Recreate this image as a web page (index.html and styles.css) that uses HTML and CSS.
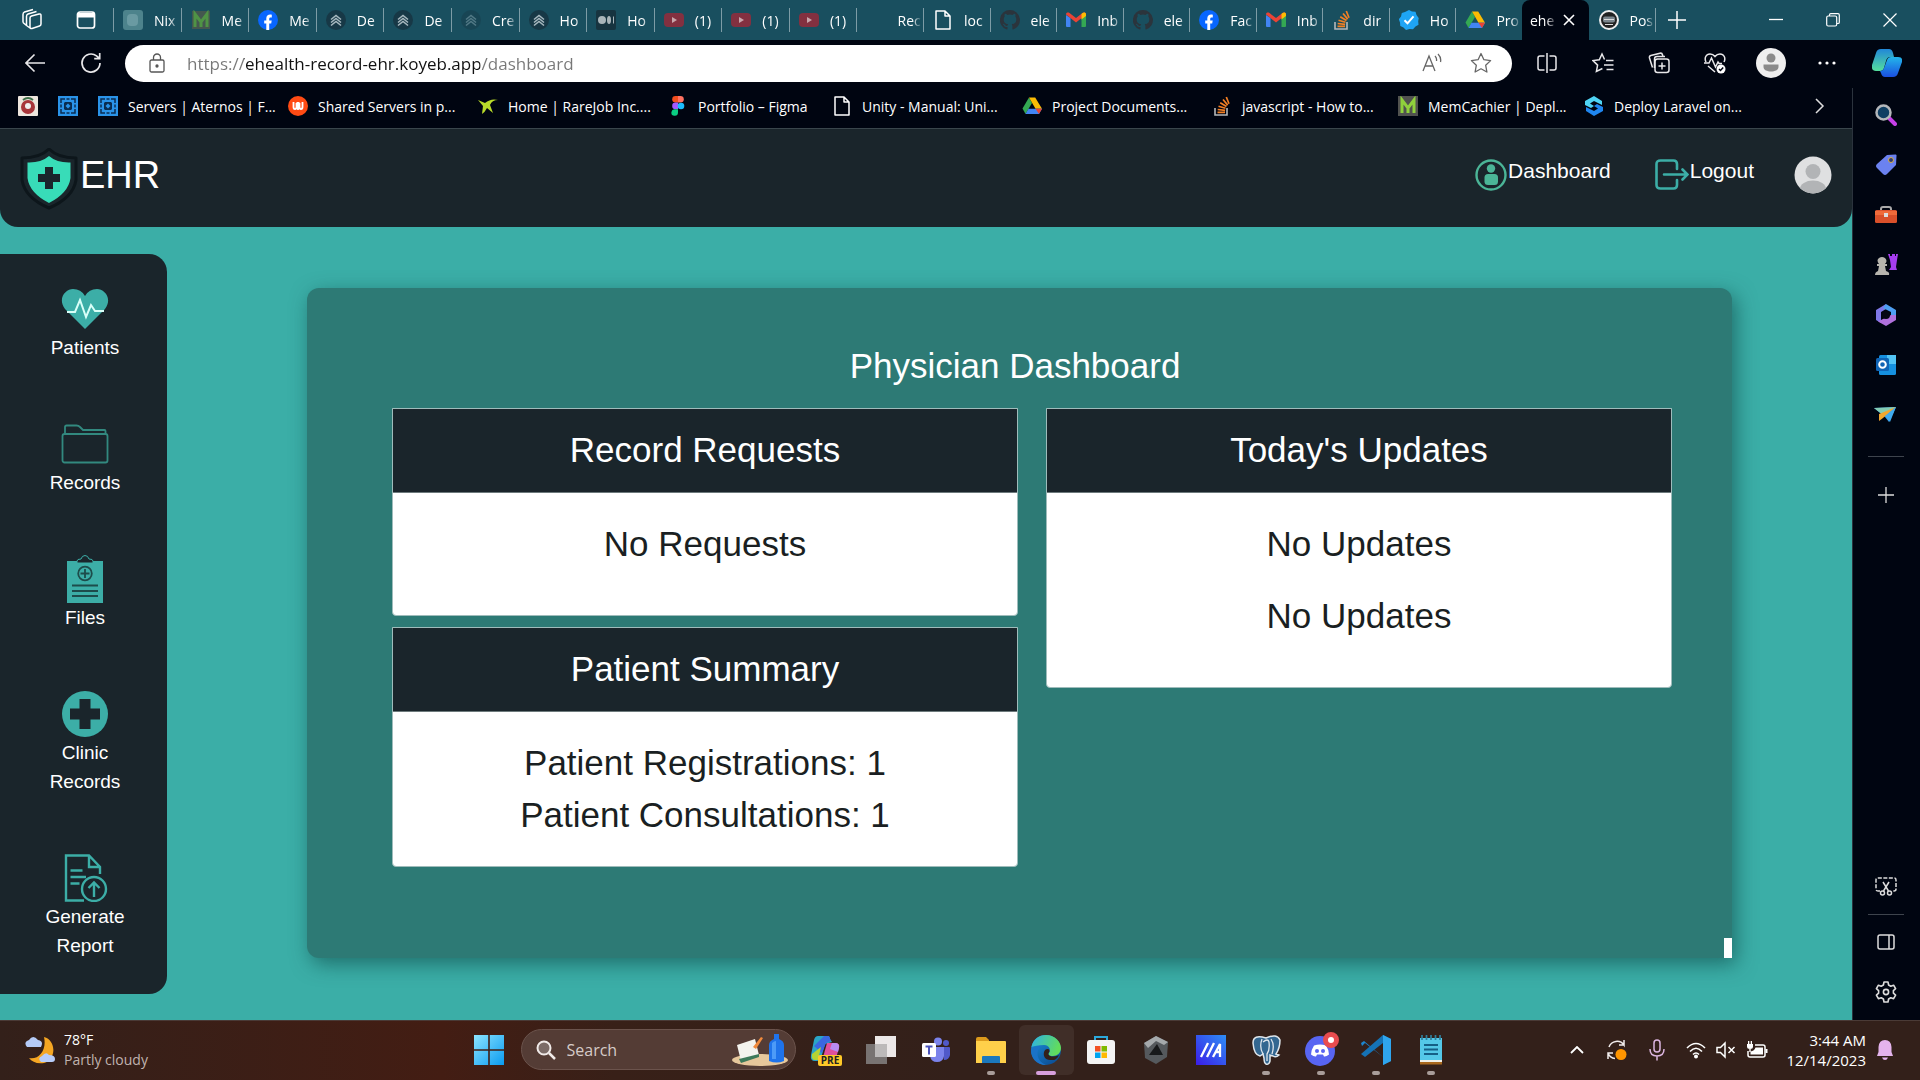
FILE: index.html
```html
<!DOCTYPE html>
<html lang="en">
<head>
<meta charset="utf-8">
<meta name="viewport" content="width=device-width, initial-scale=1">
<title>ehealth-record-ehr</title>
<link rel="stylesheet" href="styles.css">
</head>
<body>
<svg class="sprite" aria-hidden="true">
  <symbol id="i-m" viewBox="0 0 20 20"><rect x="1" y="1" width="18" height="18" fill="#44574f"/><path d="M4 17V4l6 8 6-8v13M10 12v5" fill="none" stroke="#4f9345" stroke-width="3"/></symbol>
  <symbol id="i-fb" viewBox="0 0 20 20"><circle cx="10" cy="10" r="10" fill="#0866ff"/><path d="M8.3 20v-6.6H6.2v-3h2.1V8.6c0-3 1.6-4.1 3.8-4.1.8 0 1.3.1 1.7.2v2.7h-1.2c-1.1 0-1.4.6-1.4 1.5v1.5h2.5l-.5 3h-2V20z" fill="#fff"/></symbol>
  <symbol id="i-koyeb" viewBox="0 0 20 20"><circle cx="10" cy="10" r="10" fill="#173846"/><path d="M5 9.500l5-4 5 4M5 12.500l5-4 5 4M5 15.500l5-4 5 4" fill="none" stroke="#a7b8bf" stroke-width="1.600"/></symbol>
  <symbol id="i-yt" viewBox="0 0 20 20"><rect x="0" y="3" width="20" height="14" rx="4" fill="#833040"/><path d="M8 7l5 3-5 3z" fill="#c9a5ab"/></symbol>
  <symbol id="i-file" viewBox="0 0 20 20"><path d="M3 1h9l5 5v13H3zM12 1v5h5" fill="none" stroke="#fff" stroke-width="1.500" stroke-linejoin="round"/></symbol>
  <symbol id="i-gh" viewBox="0 0 20 20"><path d="M10 0a10 10 0 0 0-3.200 19.500c.5.100.7-.2.7-.5v-2c-2.800.6-3.300-1.200-3.300-1.200-.5-1.100-1.100-1.400-1.100-1.400-.9-.6.100-.6.100-.6 1 .1 1.500 1 1.500 1 .9 1.500 2.300 1.100 2.900.8.100-.6.400-1.100.6-1.300-2.200-.3-4.500-1.100-4.500-5 0-1.100.4-2 1-2.700-.1-.3-.4-1.300.1-2.700 0 0 .8-.3 2.700 1a9.600 9.600 0 0 1 5 0c1.900-1.300 2.700-1 2.700-1 .5 1.400.2 2.400.1 2.700.6.700 1 1.600 1 2.700 0 3.900-2.300 4.700-4.600 5 .4.300.7.900.7 1.900V19c0 .3.200.6.700.500A10 10 0 0 0 10 0z" fill="#2b343c"/></symbol>
  <symbol id="i-gmail" viewBox="0 0 20 20"><path d="M0 5v11a1 1 0 0 0 1 1h3.500V8z" fill="#4285f4"/><path d="M20 5v11a1 1 0 0 1-1 1h-3.500V8z" fill="#34a853"/><path d="M0 4.500C0 2.500 2 2 3.500 3L10 8l6.500-5C18 2 20 2.500 20 4.500L10 12.500z" fill="#ea4335"/><path d="M15.500 4l1-.9C18 2 20 2.500 20 4.500V6l-4.500 3.500z" fill="#fbbc04"/></symbol>
  <symbol id="i-so" viewBox="0 0 20 20"><path d="M3 12v7h12v-7" fill="none" stroke="#b5b8bb" stroke-width="1.600"/><path d="M5.500 16.300h7.500M5.700 13.500l7.400.8M6.500 10.300l7 2M8.200 6.800l6.300 3.700M11 3.500l4.700 5.600M14.300 1l2.700 6.800" stroke="#f48024" stroke-width="1.700"/></symbol>
  <symbol id="i-check" viewBox="0 0 20 20"><path d="M10 0l3 1.500 3.500.300 1 3.200L19.700 8l-.5 3.300.3 3.500-3 1.700L14 19.300l-3.500-.3L7 20l-2.500-2.500L1.300 16 1 12.500-.2 9.300 2 6.500 2.800 3 6 2z" fill="#1ea5f5"/><path d="M5.500 10.300l3 3 6-7" fill="none" stroke="#fff" stroke-width="2"/></symbol>
  <symbol id="i-drive" viewBox="0 0 20 20"><path d="M7 1.500L.5 12.500 3.500 18 10 7z" fill="#34a853"/><path d="M7 1.500h6.200L20 12.800h-6.500z" fill="#fbbc04"/><path d="M6.500 12.800H20L17 18H3.500z" fill="#4285f4"/><path d="M13.500 12.800H20L17 18z" fill="#ea4335"/></symbol>
  <symbol id="i-robot" viewBox="0 0 20 20"><circle cx="10" cy="10" r="9" fill="#222" stroke="#eee" stroke-width="2"/><rect x="4" y="6.500" width="12" height="6" rx="2" fill="#7b858c"/><path d="M5 9.500h10M6 14.500h8" stroke="#ddd"/></symbol>
  <symbol id="i-aternos" viewBox="0 0 20 20"><rect width="20" height="20" fill="#2a93e8"/><path d="M3 7V3h4M13 3h4v4M17 13v4h-4M7 17H3v-4M8.500 3h3M8.500 17h3M3 8.500v3M17 8.500v3" fill="none" stroke="#0a2d50" stroke-width="1.500"/><path d="M7 6h6l1 1v6l-1 1H7l-1-1V7z" fill="#0a2d50"/><path d="M10 7.500l2.500 2.500-2.500 2.500L7.500 10z" fill="#2a93e8"/></symbol>
  <symbol id="i-edge" viewBox="0 0 32 32"><defs><linearGradient id="eg1" x1="0" y1="0" x2="1" y2=".3"><stop stop-color="#2cb2e8"/><stop offset="1" stop-color="#62dc5c"/></linearGradient><linearGradient id="eg2" x1="0" y1="0" x2=".7" y2="1"><stop stop-color="#1d93de"/><stop offset="1" stop-color="#0c4f96"/></linearGradient></defs><circle cx="16" cy="16" r="15" fill="url(#eg2)"/><path d="M1.500 13C3 5 9 1 16 1c9 0 15 7 15 13 0 5-4 8-8 8-5 0-5-2-4-3 2-2 1-8-5-8-6 0-10 1-12.500 2z" fill="url(#eg1)"/><path d="M19 18.500c-1.500 1.500 0 4 4 4 3 0 5-1 6-1.500-3 6-6 5-9 5-5 0-7-4-6-8 .5-2 2-3 3.500-3 2 0 2.500 2 1.500 3.500z" fill="#332019"/><path d="M12 12C5 16 6 27 16 31 6 31 1 24 1 16c0-2 5-4 11-4z" fill="#1a73c8"/></symbol>
</svg>

<header class="tabstrip">
  <button class="strip-btn" aria-label="Workspaces"><svg width="24" height="24" viewBox="0 0 24 24" fill="none" stroke="#fff" stroke-width="1.500" stroke-linejoin="round"><path d="M10 10q0-1.500 1.500-2l7.500-2q2-.4 2 1.500V16q0 1.500-1.500 2L12 20.500q-2 .5-2-1.500zM6.500 17.500V8.500q0-2 1.500-2.500L16.500 3.500M3 14.500V6.500Q3 4.500 4.500 4L13 1.500M10 20l-3.500-2.500L3 14.500"/></svg></button>
  <button class="strip-btn" aria-label="Tab actions"><svg width="20" height="20" viewBox="0 0 20 20"><rect x="1.500" y="2" width="17" height="16" rx="2.500" fill="none" stroke="#fff" stroke-width="1.700"/><path d="M2 3h16v4.500H2z" fill="#fff"/></svg></button>
  <nav class="tabs" aria-label="Open tabs">
    <div class="tab-group tab-group-a">
      <a class="tab" href="#"><svg class="fav"><rect width="20" height="20" rx="3" fill="#4d838c"/><rect x="4" y="4" width="11" height="12" rx="4" fill="#6a9aa2"/></svg><span>Nix</span></a>
      <a class="tab" href="#"><svg class="fav"><use href="#i-m"/></svg><span>Me</span></a>
      <a class="tab" href="#"><svg class="fav"><use href="#i-fb"/></svg><span>Me</span></a>
      <a class="tab" href="#"><svg class="fav"><use href="#i-koyeb"/></svg><span>De</span></a>
      <a class="tab" href="#"><svg class="fav"><use href="#i-koyeb"/></svg><span>De</span></a>
      <a class="tab" href="#"><svg class="fav dim"><use href="#i-koyeb"/></svg><span>Cre</span></a>
      <a class="tab" href="#"><svg class="fav"><use href="#i-koyeb"/></svg><span>Ho</span></a>
      <a class="tab" href="#"><svg class="fav"><rect width="20" height="20" rx="2" fill="#173440"/><circle cx="6" cy="10" r="4" fill="#a9b5ba"/><ellipse cx="13" cy="10" rx="2" ry="4" fill="#a9b5ba"/><path d="M17.500 6.500v7" stroke="#a9b5ba"/></svg><span>Ho</span></a>
      <a class="tab" href="#"><svg class="fav"><use href="#i-yt"/></svg><span>(1)</span></a>
      <a class="tab" href="#"><svg class="fav"><use href="#i-yt"/></svg><span>(1)</span></a>
      <a class="tab" href="#"><svg class="fav"><use href="#i-yt"/></svg><span>(1)</span></a>
    </div>
    <div class="tab-group tab-group-b">
      <a class="tab" href="#"><svg class="fav"></svg><span>Rec</span></a>
      <a class="tab" href="#"><svg class="fav"><use href="#i-file"/></svg><span>loc</span></a>
      <a class="tab" href="#"><svg class="fav"><use href="#i-gh"/></svg><span>ele</span></a>
      <a class="tab" href="#"><svg class="fav"><use href="#i-gmail"/></svg><span>Inb</span></a>
      <a class="tab" href="#"><svg class="fav"><use href="#i-gh"/></svg><span>ele</span></a>
      <a class="tab" href="#"><svg class="fav"><use href="#i-fb"/></svg><span>Fac</span></a>
      <a class="tab" href="#"><svg class="fav"><use href="#i-gmail"/></svg><span>Inb</span></a>
      <a class="tab" href="#"><svg class="fav"><use href="#i-so"/></svg><span>dir</span></a>
      <a class="tab" href="#"><svg class="fav"><use href="#i-check"/></svg><span>Ho</span></a>
      <a class="tab" href="#"><svg class="fav"><use href="#i-drive"/></svg><span>Pro</span></a>
      <a class="tab active" href="#" aria-current="page"><span>ehe</span><svg width="12" height="12" viewBox="0 0 12 12"><path d="M1 1l10 10M11 1L1 11" stroke="#fff" stroke-width="1.600"/></svg></a>
      <a class="tab after-active" href="#"><svg class="fav"><use href="#i-robot"/></svg><span>Pos</span></a>
    </div>
  </nav>
  <button class="new-tab" aria-label="New tab"><svg width="18" height="18" viewBox="0 0 18 18"><path d="M9 0v18M0 9h18" stroke="#fff" stroke-width="1.500"/></svg></button>
  <div class="window-controls">
    <button aria-label="Minimize"><svg width="14" height="14" viewBox="0 0 14 14"><path d="M0 6.500h14" stroke="#fff" stroke-width="1.300"/></svg></button>
    <button aria-label="Restore"><svg width="14" height="14" viewBox="0 0 14 14" fill="none" stroke="#fff" stroke-width="1.200"><rect x=".7" y="3" width="10" height="10" rx="1.500"/><path d="M3.500 3V2q0-1.300 1.300-1.300H12q1.300 0 1.300 1.300v7.200q0 1.300-1.300 1.300h-1"/></svg></button>
    <button aria-label="Close"><svg width="14" height="14" viewBox="0 0 14 14"><path d="M.5.500l13 13M13.500.500l-13 13" stroke="#fff" stroke-width="1.200"/></svg></button>
  </div>
</header>

<div class="toolbar">
  <button class="tool" aria-label="Back"><svg width="20" height="20" viewBox="0 0 20 20" fill="none" stroke="#e8e8ea" stroke-width="1.600"><path d="M20 10H1M9.500 1.500L1 10l8.500 8.500"/></svg></button>
  <button class="tool" aria-label="Refresh"><svg width="22" height="22" viewBox="0 0 22 22" fill="none" stroke="#e8e8ea" stroke-width="1.700"><path d="M20 11a9 9 0 1 1-3.500-7.100L19.500 6.500M19.700 1v5.700h-5.500"/></svg></button>
  <div class="address">
    <svg width="20" height="20" viewBox="0 0 20 20" fill="none" stroke="#555" stroke-width="1.300"><rect x="3" y="7" width="14" height="12" rx="1.500"/><path d="M6.500 7V4.500a3.500 3.500 0 0 1 7 0V7"/><circle cx="10" cy="13" r="1" fill="#555"/></svg>
    <input class="url" type="text" aria-label="Address" value="https://ehealth-record-ehr.koyeb.app/dashboard">
    <button aria-label="Read aloud"><svg width="20" height="20" viewBox="0 0 20 20" fill="none" stroke="#666" stroke-width="1.300"><path d="M1 18L7 3l6 15M3 13h8M13 3q2 2 1.500 5M16 1q3.500 3.500 2.500 8"/></svg></button>
    <button aria-label="Add to favorites"><svg width="22" height="22" viewBox="0 0 22 22"><path d="M11 1.500l2.900 6.200 6.700.9-4.900 4.700 1.200 6.700L11 16.800 5.100 20l1.200-6.700L1.400 8.600l6.700-.9z" fill="none" stroke="#666" stroke-width="1.300" stroke-linejoin="round"/></svg></button>
  </div>
  <button class="tool" aria-label="Split screen"><svg width="20" height="20" viewBox="0 0 20 20" fill="none" stroke="#e8e8ea" stroke-width="1.500"><path d="M7.500 3H3Q1 3 1 5v10q0 2 2 2h4.500M12.500 3H17q2 0 2 2v10q0 2-2 2h-4.500M10 0v20"/></svg></button>
  <button class="tool" aria-label="Favorites"><svg width="22" height="22" viewBox="0 0 22 22" fill="none" stroke="#e8e8ea" stroke-width="1.500"><path d="M12.500 7.500L10 2 7.300 7.800 1 8.600l4.600 4.500-1.200 6.400 6-3M14 8.500h7.500M12 13h9.500M14.500 17.500h7"/></svg></button>
  <button class="tool" aria-label="Collections"><svg width="22" height="22" viewBox="0 0 22 22" fill="none" stroke="#e8e8ea" stroke-width="1.500"><rect x="7" y="7" width="14" height="13.500" rx="2.500"/><path d="M14 10.500v7M10.500 14h7M4.500 15.500L1.500 6q-.5-2 1.300-2.500L12 1.200q2-.4 2.500 1.500l.3 1.300M6.500 16V7q0-2.500 2.500-2.500h8"/></svg></button>
  <button class="tool" aria-label="Browser essentials"><svg width="22" height="22" viewBox="0 0 22 22" fill="none" stroke="#e8e8ea" stroke-width="1.500"><path d="M2 10C0 6 2 2 6 2q3 0 5 2.500Q13 2 16 2c4 0 6 4 4 8M4 14l7 6M0 11h5l2.500-5 4 9 2.500-5 1 1.500h3"/><circle cx="17" cy="17" r="4.500" fill="#fff" stroke="none"/><path d="M15 17l1.500 1.500 2.700-3" stroke="#000511"/></svg></button>
  <button class="tool" aria-label="Profile"><svg width="30" height="30" viewBox="0 0 30 30"><circle cx="15" cy="15" r="15" fill="#efefef"/><circle cx="15" cy="10" r="4.500" fill="#8b8b8b"/><path d="M7.500 16.500h15v2.500c0 6-15 6-15 0z" fill="#8b8b8b"/></svg></button>
  <button class="tool" aria-label="Settings and more"><svg width="18" height="4" viewBox="0 0 18 4" fill="#fff"><circle cx="2" cy="2" r="1.600"/><circle cx="9" cy="2" r="1.600"/><circle cx="16" cy="2" r="1.600"/></svg></button>
  <button class="tool tool-copilot" aria-label="Copilot"><svg width="30" height="28" viewBox="0 0 30 28"><defs><linearGradient id="cp1" x1="0" y1="0" x2="0" y2="1"><stop stop-color="#2187d8"/><stop offset="1" stop-color="#55df9c"/></linearGradient><linearGradient id="cp2" x1="0" y1="0" x2="0" y2="1"><stop stop-color="#23b6ea"/><stop offset="1" stop-color="#1a4fe0"/></linearGradient></defs><path d="M9 0h8q3 0 4 4l1 4h-4q-3 0-4 4l-2 7q-1 3-4 3H4q-5 0-4-6L4 4q1-4 5-4z" fill="url(#cp1)"/><path d="M21 28h-8q-3 0-4-4l-1-2q3 0 4-3l3-8q1-3 4-3h7q5 0 4 5l-4 11q-1 4-5 4z" fill="url(#cp2)"/></svg></button>
</div>

<div class="workspace">
  <div class="viewport">
    <nav class="bookmarks" aria-label="Bookmarks">
      <a class="bookmark-icon" href="#" aria-label="Badge site"><svg class="fav"><rect width="20" height="20" rx="1" fill="#eee6de"/><circle cx="10" cy="11" r="7" fill="#a8353a"/><circle cx="10" cy="10" r="3" fill="#eee"/><path d="M5 4q5-4 10 0" stroke="#3c6d46" stroke-width="2" fill="none"/></svg></a>
      <a class="bookmark-icon" href="#" aria-label="Aternos"><svg class="fav"><use href="#i-aternos"/></svg></a>
      <a class="bookmark" href="#"><svg class="fav"><use href="#i-aternos"/></svg><span>Servers | Aternos | F...</span></a>
      <a class="bookmark" href="#"><svg class="fav"><circle cx="10" cy="10" r="10" fill="#ff4b14"/><path d="M5.500 6v5q0 2 1.500 2t1.500-2V7M8.500 7h3M11.500 7v4q0 2 1.500 2t1.500-2V6M10 7v7" fill="none" stroke="#fff" stroke-width="1.800"/></svg><span>Shared Servers in p...</span></a>
      <a class="bookmark" href="#"><svg class="fav"><path d="M0 4l7 3Q13 2 20 4q-6 0-8 5l3 8-6-5q-2 4-5 6l1-8z" fill="#b9dc2a"/></svg><span>Home | RareJob Inc....</span></a>
      <a class="bookmark bookmark-short" href="#"><svg class="fav"><path d="M10 0H7.500a3.300 3.300 0 0 0 0 6.600H10z" fill="#f24e1e"/><path d="M10 0h2.500a3.300 3.300 0 0 1 0 6.600H10z" fill="#ff7262"/><path d="M10 6.600H7.500a3.300 3.300 0 0 0 0 6.600H10z" fill="#a259ff"/><circle cx="13" cy="10" r="3.300" fill="#1abcfe"/><path d="M10 13.300H7.500a3.300 3.300 0 1 0 2.500 3.300z" fill="#0acf83"/></svg><span>Portfolio – Figma</span></a>
      <a class="bookmark" href="#"><svg class="fav"><use href="#i-file"/></svg><span>Unity - Manual: Uni...</span></a>
      <a class="bookmark" href="#"><svg class="fav"><use href="#i-drive"/></svg><span>Project Documents...</span></a>
      <a class="bookmark bookmark-compact" href="#"><svg class="fav"><use href="#i-so"/></svg><span>javascript - How to...</span></a>
      <a class="bookmark bookmark-compact" href="#"><svg class="fav"><rect width="20" height="20" fill="#51524f"/><path d="M4 17V4l6 8 6-8v13M10 12v5" fill="none" stroke="#8fd13c" stroke-width="3"/></svg><span>MemCachier | Depl...</span></a>
      <a class="bookmark bookmark-compact" href="#"><svg class="fav"><path d="M10 0l8 5v4l-8-4-4 2.500 4 2.500-3 2-6-3V5z" fill="#4fd4f4"/><path d="M10 20l-8-5v-4l8 4 4-2.500L10 10l3-2 6 3v4z" fill="#1f86f0"/></svg><span>Deploy Laravel on...</span></a>
      <button class="bookmark-more" aria-label="More bookmarks"><svg width="10" height="16" viewBox="0 0 10 16"><path d="M1 1l7 7-7 7" fill="none" stroke="#ddd" stroke-width="1.500"/></svg></button>
    </nav>

    <div class="page">
      <header class="site-header">
        <a class="brand" href="#"><svg width="60" height="62" viewBox="0 0 60 62"><path d="M29 1q9 9 27 9v22Q53 50 29 60 5 50 2 32V10q18 0 27-9z" fill="none" stroke="#0d161b" stroke-width="3" stroke-linejoin="round"/><path d="M29 8q8 7 21.500 6.500V30q-2 15-21.500 25Q9.500 45 7.500 30V14.500Q21 15 29 8z" fill="#38dcb8"/><path d="M25 19h8v7h7v8h-7v7h-8v-7h-7v-8h7z" fill="#1a252b"/></svg><span>EHR</span></a>
        <nav class="site-nav">
          <a href="#"><svg width="32" height="32" viewBox="0 0 32 32"><circle cx="16" cy="16" r="14.500" fill="none" stroke="#4bb597" stroke-width="2.400"/><circle cx="16" cy="9.500" r="4.200" fill="#4bb597"/><rect x="9.500" y="15" width="13.500" height="11" rx="3.500" fill="#4bb597"/></svg><span>Dashboard</span></a>
          <a href="#"><svg width="34" height="32" viewBox="0 0 34 32" fill="none" stroke="#3caea7" stroke-width="2.600" stroke-linecap="round"><path d="M22 10V5q0-3.500-3.500-3.500h-13Q1.500 1.500 1.500 5v21q0 3.500 4 3.500h13q3.500 0 3.500-3.500v-5M9 15.500h23M27.500 10.500l5 5-5 5"/></svg><span>Logout</span></a>
          <a class="avatar" href="#" aria-label="Profile"><svg width="38" height="38" viewBox="0 0 38 38"><defs><clipPath id="av"><circle cx="19" cy="19" r="18.500"/></clipPath></defs><g clip-path="url(#av)"><rect width="38" height="38" fill="#dfe0e1"/><circle cx="19" cy="15.500" r="7.500" fill="#b2b4b6"/><ellipse cx="19" cy="33" rx="13" ry="8.500" fill="#b2b4b6"/></g></svg></a>
        </nav>
      </header>

      <div class="site-body">
        <nav class="site-sidebar" aria-label="Sections">
          <a href="#"><svg class="side-icon" viewBox="0 0 48 48"><path d="M24 44L4 24C-4 13 5 4 12 4q8 0 12 7Q28 4 36 4c7 0 16 9 8 20z" fill="#3caea7"/><path d="M6 27h8l5-12 6 17 5-12 4 6h9" fill="none" stroke="#d9fff8" stroke-width="2"/></svg><span>Patients</span></a>
          <a href="#"><svg class="side-icon" viewBox="0 0 48 48" fill="none" stroke="#32897f" stroke-width="1.800"><rect x="1.500" y="14" width="45" height="28.500" rx="2"/><path d="M4 14V7q0-1.500 1.500-1.500h10q2 0 3.500 1.500l3 3h21.500q1 0 1 1v3"/></svg><span>Records</span></a>
          <a href="#"><svg class="side-icon" viewBox="0 0 48 48"><rect x="6" y="6" width="36" height="42" fill="#3caea7"/><path d="M16 8v-2q0-2 4-2 1-3.500 4-3.500T28 4q4 0 4 2v2z" fill="#1a252b" stroke="#3caea7" stroke-width="1"/><circle cx="24" cy="18.500" r="6.800" fill="none" stroke="#1d4c4b" stroke-width="1.800"/><path d="M24 14v9M19.500 18.500h9M11 30.500h26M11 36h26M11 41h26" stroke="#1d4c4b" stroke-width="1.800"/></svg><span>Files</span></a>
          <a href="#"><svg class="side-icon" viewBox="0 0 48 48"><circle cx="24" cy="24" r="23" fill="#3caea7"/><path d="M18.500 9h11v9.500H39v11h-9.500V39h-11v-9.500H9v-11h9.500z" fill="#1a252b"/></svg><span>Clinic<br>Records</span></a>
          <a href="#"><svg class="side-icon" viewBox="0 0 48 48" fill="none" stroke="#3caea7" stroke-width="2.400"><path d="M23 46.500H5V1.500h23L39 13v7M28 1.500V13h11M9.500 16.500h12M9.500 23H25M9.500 29.500h9"/><circle cx="33" cy="35" r="12"/><path d="M33 43V28.500M27.500 34l5.500-5.500 5.500 5.500"/></svg><span>Generate<br>Report</span></a>
        </nav>
        <main class="panel">
          <h1>Physician Dashboard</h1>
          <div class="card-columns">
            <div class="card-column">
              <section class="card">
                <h2>Record Requests</h2>
                <div class="card-body"><p class="spaced">No Requests</p></div>
              </section>
              <section class="card">
                <h2>Patient Summary</h2>
                <div class="card-body"><p>Patient Registrations: 1</p><p>Patient Consultations: 1</p></div>
              </section>
            </div>
            <div class="card-column">
              <section class="card">
                <h2>Today's Updates</h2>
                <div class="card-body"><p class="spaced">No Updates</p><p class="spaced">No Updates</p></div>
              </section>
            </div>
          </div>
          <span class="scroll-corner"></span>
        </main>
      </div>
    </div>
  </div>

  <aside class="edge-bar" aria-label="Browser sidebar">
    <button aria-label="Search"><svg width="22" height="22" viewBox="0 0 22 22"><path d="M14 14l6 6" stroke="#c640e8" stroke-width="4" stroke-linecap="round"/><circle cx="8.500" cy="8.500" r="7" fill="#0f3f63" stroke="#b4b7ba" stroke-width="2.500"/></svg></button>
    <button aria-label="Shopping"><svg width="22" height="22" viewBox="0 0 22 22"><path d="M12 1l8.500-.5q1 0 1 1L21 11l-9 9q-2 2-4 0l-6-6q-2-2 0-4z" fill="#6b82f0"/><circle cx="16" cy="6" r="2.500" fill="#303a70" stroke="#d8b04c"/></svg></button>
    <button aria-label="Tools"><svg width="24" height="20" viewBox="0 0 24 20"><path d="M7 6V4q0-2 2-2h6q2 0 2 2v2" fill="none" stroke="#aaa" stroke-width="2"/><rect x="1" y="5" width="22" height="13" rx="1.500" fill="#d9502a"/><path d="M1 6h22v4H1z" fill="#f06b3a"/><rect x="10" y="8" width="4" height="4" fill="#ddd"/></svg></button>
    <button aria-label="Games"><svg width="24" height="24" viewBox="0 0 24 24"><path d="M4 22h-3q0-3 3-4l1-5H3v-2h2q-3-4 0-6 3-2 6 0 3 3 0 6h2v2h-2l1 5q4 1 3 4z" fill="#b7b5ae"/><path d="M14 1h2v2h2V1h3v2h1V1h2l-1 6-1 7 1 3h-8l2-3-1-7z" fill="#a63df0"/></svg></button>
    <button aria-label="Microsoft 365"><svg width="22" height="22" viewBox="0 0 22 22"><path d="M11 0L1 6v10l5 3V8l5-3z" fill="#7f78e8"/><path d="M11 0l10 6v10l-5-5V8L8 4z" fill="#4d9ff2"/><path d="M21 11v5l-10 6-8-4.500 13-6.500z" fill="#b071dd"/><circle cx="11" cy="11" r="4" fill="#050814"/></svg></button>
    <button aria-label="Outlook"><svg width="22" height="22" viewBox="0 0 22 22"><rect x="4" y="1" width="17" height="20" rx="1.500" fill="#1590df"/><path d="M12 1h9v9h-9z" fill="#52c4f5"/><rect x="1" y="4" width="13" height="13" rx="1.500" fill="#0f64b5"/><circle cx="7.500" cy="10.500" r="3.300" fill="none" stroke="#fff" stroke-width="2"/></svg></button>
    <button aria-label="Drop"><svg width="24" height="18" viewBox="0 0 24 18"><path d="M0 2l22-1-7 15-4-5z" fill="#3b9ce6"/><path d="M0 2l22-1L9 9z" fill="#84cdb4"/><path d="M22 1L5 8v7l4-3z" fill="#f2a72f"/><path d="M22 1L11 10l5 6z" fill="#3fabf0"/></svg></button>
    <span class="edge-rule edge-rule-top"></span>
    <button aria-label="Customize"><svg width="16" height="16" viewBox="0 0 16 16"><path d="M8 0v16M0 8h16" stroke="#ddd" stroke-width="1.300"/></svg></button>
    <button class="edge-lower" aria-label="Screenshot"><svg width="22" height="20" viewBox="0 0 22 20" fill="none" stroke="#ddd" stroke-width="1.500"><path d="M5 14H3q-2 0-2-2V3q0-2 2-2h16q2 0 2 2v9q0 2-2 2h-2" stroke-dasharray="4 1.500"/><path d="M8 5l5.500 9M14 5l-5.500 9"/><circle cx="7.500" cy="16" r="2"/><circle cx="14.500" cy="16" r="2"/></svg></button>
    <span class="edge-rule edge-rule-bottom"></span>
    <button aria-label="Toggle sidebar"><svg width="18" height="18" viewBox="0 0 18 18" fill="none" stroke="#ddd" stroke-width="1.500"><rect x="1" y="2" width="16" height="14" rx="2"/><path d="M12 2v14"/></svg></button>
    <button aria-label="Settings"><svg width="22" height="22" viewBox="0 0 22 22" fill="none" stroke="#ddd" stroke-width="1.600" stroke-linejoin="round"><path d="M9 1h4l.6 3 2.200 1.200 2.800-1 2 3.500-2.200 2v2.500l2.200 2-2 3.500-2.800-1-2.200 1.300L13 21H9l-.6-3-2.200-1.300-2.800 1-2-3.500 2.200-2V9.700l-2.200-2 2-3.500 2.800 1L8.400 4z"/><circle cx="11" cy="11" r="2.600"/></svg></button>
  </aside>
</div>

<footer class="taskbar">
  <button class="weather"><svg width="32" height="28" viewBox="0 0 32 28"><path d="M20 1c12 3 13 22 0 26-7 1-12-1-15-5 10 2 18-8 15-21z" fill="#f5a623"/><path d="M3 11q-4-5 2-7 4-6 9 0 6 1 3 7z" fill="#b5cbf7"/><path d="M17 26q-4-4 1-6 4-5 7-1 6 0 6 4 0 3-3 3z" fill="#b8cdfa"/></svg><span class="weather-text"><span>78°F</span><span class="muted">Partly cloudy</span></span></button>
  <div class="task-center">
    <button class="task" aria-label="Start"><svg width="30" height="30" viewBox="0 0 30 30"><defs><linearGradient id="win" x1="0" y1="0" x2="1" y2="1"><stop stop-color="#8ce4ff"/><stop offset="1" stop-color="#0a9bf0"/></linearGradient></defs><path d="M0 0h14.200v14.200H0zM15.800 0H30v14.200H15.800zM0 15.800h14.200V30H0zM15.800 15.800H30V30H15.800z" fill="url(#win)"/></svg></button>
    <label class="task-search"><svg width="20" height="20" viewBox="0 0 20 20"><circle cx="8" cy="8" r="6.500" fill="#7b6b67" stroke="#f1ebe9" stroke-width="2"/><path d="M13 13l6 6" stroke="#f1ebe9" stroke-width="2.500"/></svg><input type="search" placeholder="Search" aria-label="Search"><svg width="58" height="34" viewBox="0 0 58 34"><ellipse cx="29" cy="27" rx="28" ry="6" fill="#e6c79b"/><path d="M6 12l18-6 4 16-18 6z" fill="#f3f3ee"/><path d="M8 26l20-5v3L10 30z" fill="#3d7a5a"/><path d="M22 14l8-10 2 1-7 11z" fill="#f08a3c"/><path d="M38 12q0-4 5-6V1h5v5q5 2 5 6v16q-7 3-15 0z" fill="#1f73ea"/><path d="M41 10q2-2 4-2v18h-4z" fill="#4d9bf7"/></svg></label>
    <button class="task" aria-label="Copilot preview"><svg width="32" height="32" viewBox="0 0 32 32"><path d="M8 2h9q3 0 3 3l2 3-7 2-4 14q-1 3-4 3H5q-5 0-4-6L4 6q1-4 4-4z" fill="#2aa5c8"/><path d="M4 12l10-10h5l2 5-5 2-4 10z" fill="#3a67e0"/><path d="M2 20l9-7-3 13H5q-4 0-3-6z" fill="#b5d334"/><path d="M17 9h8q5 0 4 5l-3 10q-1 3-5 3h-9z" fill="#e0509c"/><path d="M22 9h3q5 0 4 5l-1 4-8-3z" fill="#b88bf2"/><rect x="8" y="21" width="24" height="11" rx="2" fill="#ffc928"/><text x="20" y="30" class="pre-tag">PRE</text></svg></button>
    <button class="task" aria-label="Task view"><svg width="30" height="30" viewBox="0 0 30 30"><rect x="9" y="1" width="21" height="21" fill="#ece8e8"/><rect y="9" width="21" height="20" fill="#7f7c7c" fill-opacity=".9"/><path d="M9 9h12v13H9z" fill="#bcb9b9"/></svg></button>
    <button class="task" aria-label="Teams"><svg width="28" height="26" viewBox="0 0 28 26"><circle cx="16" cy="4.500" r="4" fill="#7b83eb"/><circle cx="24" cy="6" r="3" fill="#5059c9"/><path d="M20 10h7q1 0 1 1v7q-1 5-6 5z" fill="#5059c9"/><path d="M8 10h14v9q-1 6-7 6t-7-6z" fill="#7b83eb"/><rect y="6" width="14" height="14" rx="1.500" fill="#fff"/><path d="M3.500 9.500h7M7 9.500v8" stroke="#4b53bc" stroke-width="2"/></svg></button>
    <button class="task running" aria-label="File Explorer"><svg width="32" height="28" viewBox="0 0 32 28"><path d="M1 3q0-2 2-2h8l3 3v5H1z" fill="#dc9a1c"/><path d="M1 5h29q1 0 1 1v21H1z" fill="#ffd04a"/><path d="M7 27v-6q0-1 1-1h16q1 0 1 1v6z" fill="#1b78bd"/></svg></button>
    <button class="task running current" aria-label="Edge"><svg width="32" height="32"><use href="#i-edge"/></svg></button>
    <button class="task" aria-label="Store"><svg width="30" height="30" viewBox="0 0 30 30"><path d="M9 7V2h12v5" fill="none" stroke="#2ca9dc" stroke-width="2"/><rect x="1" y="5" width="28" height="24" rx="3" fill="#f4f4f4"/><path d="M9 11h5.500v5.500H9z" fill="#f25022"/><path d="M15.500 11H21v5.500h-5.500z" fill="#7fba00"/><path d="M9 17.500h5.500V23H9z" fill="#00a4ef"/><path d="M15.500 17.500H21V23h-5.500z" fill="#ffb900"/></svg></button>
    <button class="task" aria-label="Armoury"><svg width="26" height="28" viewBox="0 0 26 28"><path d="M13 0l12 6-1 15-11 7-11-6L1 7z" fill="#55595d"/><path d="M13 0l12 6-4 3-8-4-8 7-4-5z" fill="#a5a9ac"/><path d="M14 8l6 11H6z" fill="#17191b"/></svg></button>
    <button class="task" aria-label="MyASUS"><svg width="30" height="30" viewBox="0 0 30 30"><defs><linearGradient id="asus" x1="0" y1="1" x2="1" y2="0"><stop stop-color="#3b1ce8"/><stop offset="1" stop-color="#2d8ef5"/></linearGradient></defs><rect width="30" height="30" fill="url(#asus)"/><path d="M5 22L12 8M11 22l7-14M17 22l7-13v13M19 17h4" fill="none" stroke="#fff" stroke-width="2.300"/></svg></button>
    <button class="task running" aria-label="PostgreSQL"><svg width="30" height="30" viewBox="0 0 30 30"><path d="M15 3Q26-2 29 5q0 8-4 14l3 1q-3 3-6 1l-3-1v6q-1 4-4 3-2-1-2-6l-1-4-3 2Q3 20 2 8 2-1 15 3z" fill="#336791" stroke="#dfe6ec" stroke-width="1.500"/><path d="M11 4q-3 8 1 15M20 4q4 6 1 15M12 7q5-4 6 0 1 8-2 12v7" fill="none" stroke="#dfe6ec" stroke-width="1.300"/></svg></button>
    <button class="task running" aria-label="Discord"><svg width="36" height="36" viewBox="0 0 36 36"><circle cx="17" cy="19" r="15" fill="#5865f2"/><path d="M11 13.500q6-2 12 0 3 4.500 3 9-3 2.500-5 2l-1-2h-6l-1 2q-2 .5-5-2 0-4.500 3-9z" fill="#fff"/><circle cx="14" cy="19" r="2" fill="#5865f2"/><circle cx="20" cy="19" r="2" fill="#5865f2"/><circle cx="28" cy="8" r="5.500" fill="#fff" stroke="#e84c4f" stroke-width="5"/></svg></button>
    <button class="task running" aria-label="Visual Studio Code"><svg width="30" height="30" viewBox="0 0 30 30"><path d="M22 0l8 4v22l-8 4v-8L4 8 1 11l-1-3 3-2 19 16z" fill="#1c86cf"/><path d="M22 0v8L4 22l-4-3z" fill="#1572b5"/><path d="M22 0l8 4v22l-8 4z" fill="#2fa5ee"/></svg></button>
    <button class="task running" aria-label="Notepad"><svg width="24" height="30" viewBox="0 0 24 30"><path d="M1 3h22v25H1z" fill="#54c8e8"/><path d="M1 25h22v2H1z" fill="#f0efe8"/><path d="M1 27h22v2.500H1z" fill="#a9681d"/><path d="M3 0v5M7.500 0v5M12 0v5M16.500 0v5M21 0v5" stroke="#2f7f9c" stroke-width="1.700"/><path d="M5 10h14M5 14.500h14M5 19h14" stroke="#155f86" stroke-width="1.800"/></svg></button>
  </div>
  <div class="tray">
    <button class="tray-wide" aria-label="Show hidden icons"><svg width="14" height="8" viewBox="0 0 14 8"><path d="M1 7l6-6 6 6" fill="none" stroke="#fff" stroke-width="1.800"/></svg></button>
    <button class="tray-wide" aria-label="Updates"><svg width="22" height="22" viewBox="0 0 22 22"><path d="M3 8a8.500 8.500 0 0 1 15-2V1M18 6h-5M2 20v-6h5M2 14q2 5 7 5.500" fill="none" stroke="#f2eded" stroke-width="1.500"/><circle cx="15" cy="15.500" r="5.500" fill="#ff9500"/></svg></button>
    <button class="tray-wide" aria-label="Microphone"><svg width="16" height="22" viewBox="0 0 16 22" fill="none" stroke="#dcb5e0" stroke-width="1.500"><rect x="5" y="1" width="6" height="12" rx="3"/><path d="M1 10q0 7 7 7t7-7M8 17v4.500"/></svg></button>
    <button class="tray-system" aria-label="Network, volume and battery">
      <svg width="20" height="18" viewBox="0 0 20 18" fill="none" stroke="#fff" stroke-width="1.600"><path d="M1 7q9-9 18 0M4 10.500q6-6.500 12 0M7 13.500q3-3 6 0"/><circle cx="10" cy="15.500" r="1.200" fill="#fff"/></svg>
      <svg width="20" height="18" viewBox="0 0 20 18" fill="none" stroke="#fff" stroke-width="1.500"><path d="M1 6.500h3.500L9 2v14l-4.500-4.500H1zM12.500 6l6 6M18.500 6l-6 6"/></svg>
      <svg width="22" height="18" viewBox="0 0 22 18"><path d="M9 4h8q2 0 2 2v8q0 2-2 2H4q-2 0-2-2v-4" fill="none" stroke="#fff" stroke-width="1.500"/><path d="M9.500 6.500H17v7H4.500v-3q4-.5 5-4z" fill="#fff"/><path d="M20.500 8v4" stroke="#fff" stroke-width="2"/><path d="M1 3h6v2.500Q7 8 4 8T1 5.500zM2 0h1.300v3H2zM4.700 0H6v3H4.700zM3.300 8h1.400v3H3.300z" fill="#fff"/></svg>
    </button>
    <button class="clock"><span>3:44 AM</span><span>12/14/2023</span></button>
    <button class="bell" aria-label="Notifications"><svg width="18" height="22" viewBox="0 0 18 22"><path d="M9 1q6 0 6.500 7v5l1.500 4H1l1.500-4V8Q3 1 9 1zM6 18.500h6Q11 21 9 21t-3-2.500z" fill="#e4b3ec"/></svg></button>
  </div>
</footer>
</body>
</html>
```
FILE: styles.css
```css
:root {
  --chrome: #000511;
  --strip: #194f5f;
  --ink: #1a252b;
  --teal: #3baea7;
  --panel: #2d7a75;
  --ui-font: "Open Sans", "Noto Sans", sans-serif;
  --site-font: "Liberation Sans", Arial, sans-serif;
}

* { box-sizing: border-box; }

body {
  margin: 0;
  min-height: 100vh;
  display: flex;
  flex-direction: column;
  background: var(--chrome);
  color: #fff;
  font-family: var(--ui-font);
  font-size: 14px;
  overflow-x: hidden;
}

.sprite { position: absolute; width: 0; height: 0; }
svg { display: block; flex: none; }
a { color: inherit; text-decoration: none; }
h1, h2, p { margin: 0; font-weight: 400; }

button {
  display: flex;
  align-items: center;
  justify-content: center;
  padding: 0;
  border: 0;
  background: none;
  color: inherit;
  font: inherit;
}

input {
  min-width: 0;
  padding: 0;
  border: 0;
  outline: 0;
  background: none;
  font: inherit;
}

.fav { width: 20px; height: 20px; }
.dim { opacity: .4; }

/* Tab strip */
.tabstrip {
  display: flex;
  height: 40px;
  padding: 0 2px 0 5px;
  background: var(--strip);
}

.strip-btn { width: 54px; }
.tabs { display: flex; flex: 1; min-width: 0; }
.tab-group { display: flex; min-width: 0; }
.tab-group-a { flex: 743 1 0; }
.tab-group-b { flex: 798 1 0; }

.tab {
  display: flex;
  flex: 1 1 0;
  align-items: center;
  min-width: 0;
}

.tab::before {
  content: "";
  width: 1px;
  height: 24px;
  margin-right: 9px;
  flex: none;
  background: #7d9ca6;
}

.tab span {
  width: 25px;
  margin-left: 11px;
  white-space: nowrap;
  mask-image: linear-gradient(90deg, #000 60%, transparent);
}

.tab.active { background: var(--chrome); border-radius: 8px 8px 0 0; }
.tab.active::before, .tab.after-active::before { background: none; }
.tab.active::before { margin-right: 7px; }
.tab.active span { width: 27px; margin: 0 6px 0 0; }

.new-tab { width: 44px; background: linear-gradient(#7d9ca6, #7d9ca6) left center / 1px 24px no-repeat; }
.window-controls { display: flex; margin-left: 48px; }
.window-controls button { width: 57px; }

/* Toolbar */
.toolbar {
  display: flex;
  align-items: center;
  height: 48px;
  padding: 0 1px 2px 7px;
}

.tool { width: 56px; height: 40px; }
.tool-copilot { width: 64px; }

.address {
  display: flex;
  flex: 1;
  align-items: center;
  height: 37px;
  margin: 0 7px 0 6px;
  padding: 0 7px 0 22px;
  border-radius: 19px;
  background: #fff;
}

.address button { width: 49px; height: 32px; }

.url {
  flex: 1;
  margin-left: 20px;
  font-size: 17px;
  color: transparent;
  background: linear-gradient(90deg, #777 57px, #111 57px, #111 293px, #777 293px);
  -webkit-background-clip: text;
  background-clip: text;
}

/* Content beside the browser sidebar */
.workspace { display: flex; flex: 1; }
.viewport { display: flex; flex: 1; flex-direction: column; min-width: 0; }

.bookmarks {
  display: flex;
  align-items: center;
  height: 40px;
  padding: 0 0 4px 18px;
}

.bookmark-icon { width: 40px; }

.bookmark {
  display: flex;
  align-items: center;
  gap: 10px;
  flex: 0 1 190px;
  min-width: 0;
  white-space: nowrap;
}

.bookmark-short { flex-basis: 164px; }
.bookmark-compact { flex-basis: 186px; }
.bookmark-more { width: 40px; height: 32px; margin: 0 12px 0 auto; }

.page {
  display: flex;
  flex: 1;
  flex-direction: column;
  background: var(--teal);
  font-family: var(--site-font);
}

.site-header {
  display: flex;
  align-items: flex-start;
  justify-content: space-between;
  height: 99px;
  padding: 19px 20px 0 20px;
  border-top: 1px solid #3a464c;
  border-radius: 0 0 18px 18px;
  background: var(--ink);
}

.brand { display: flex; font-size: 38px; line-height: 54px; }
.site-nav { display: flex; font-size: 21px; line-height: 24px; padding-top: 11px; }
.site-nav a { display: flex; margin-left: 44px; }
.site-nav a span { margin-left: 1px; }
.site-nav .avatar { margin: -3px 0 0 40px; }

.site-body {
  display: flex;
  flex: 1;
  align-items: flex-start;
  padding: 27px 120px 26px 0;
}

.site-sidebar {
  display: flex;
  flex-direction: column;
  align-items: center;
  gap: 58px;
  width: 167px;
  padding: 31px 0 34px 3px;
  border-radius: 0 18px 18px 0;
  background: var(--ink);
  font-size: 19px;
  line-height: 29px;
  text-align: center;
}

.side-icon { width: 48px; height: 48px; margin: 0 auto; }

.panel {
  position: relative;
  flex: 1;
  min-height: 670px;
  margin: 34px 0 0 140px;
  padding: 52px 60px 90px 85px;
  border-radius: 12px 12px 0 12px;
  background: var(--panel);
  box-shadow: 4px 6px 20px rgba(10, 60, 60, .55);
  font-size: 35px;
  line-height: 52px;
  text-align: center;
}

.panel h1 { padding-right: 34px; margin-bottom: 16px; font-size: 35px; }
.card-columns { display: grid; grid-template-columns: 1fr 1fr; gap: 28px; }
.card-column { display: flex; flex-direction: column; gap: 11px; }

.card {
  border: 1px solid #9fbcbb;
  border-radius: 0 0 4px 4px;
  background: #fff;
  color: #1a1f22;
}

.card h2 {
  padding: 15px 0 16px;
  border-bottom: 1px solid #6d7a7c;
  background: var(--ink);
  color: #fff;
  font-size: 35px;
}

.card-body { padding: 25px 16px; }
.spaced { margin-bottom: 20px; }

.scroll-corner {
  position: absolute;
  right: 0;
  bottom: 0;
  width: 8px;
  height: 20px;
  background: #fff;
}

/* Browser sidebar */
.edge-bar {
  display: flex;
  flex-direction: column;
  align-items: center;
  width: 68px;
  padding: 2px 2px 3px 0;
  border-left: 1px solid #2b333d;
}

.edge-bar button { width: 50px; height: 50px; }
.edge-rule { width: 36px; height: 1px; background: #3e444d; }
.edge-rule-top { margin: 16px 0 13px; }
.edge-rule-bottom { margin: 2px 0; }
.edge-lower { margin-top: auto; }

/* Taskbar */
.taskbar {
  display: grid;
  grid-template-columns: 1fr auto 1fr;
  align-items: center;
  height: 60px;
  padding-bottom: 2px;
  border-top: 1px solid #4a3a36;
  background: linear-gradient(90deg, #33201a, #431d13 23%, #382018 32%, #33201a 50%);
}

.weather { justify-self: start; padding-left: 24px; gap: 8px; }
.weather-text { display: flex; flex-direction: column; line-height: 20px; text-align: left; }
.muted { color: #c0b3af; }

.task-center { display: flex; align-items: center; }

.task {
  position: relative;
  width: 55px;
  height: 50px;
}

.running::after {
  content: "";
  position: absolute;
  bottom: 0;
  left: 50%;
  width: 8px;
  height: 4px;
  margin-left: -4px;
  border-radius: 2px;
  background: #a99d9a;
}

.current { background: #402e28; border-radius: 6px; }
.current::after { width: 20px; margin-left: -10px; background: #d7a0dd; }
.pre-tag { fill: #222; font-size: 10px; font-weight: 700; text-anchor: middle; }

.task-search {
  display: flex;
  align-items: center;
  width: 275px;
  height: 41px;
  margin: 0 3px 0 4px;
  padding: 0 6px 0 14px;
  border: 1px solid #6b534c;
  border-radius: 21px;
  background: #543c35;
}

.task-search input {
  flex: 1;
  margin-left: 11px;
  color: #fff;
  font-size: 16px;
}

.task-search input::placeholder { color: #d6cbc8; opacity: 1; }

.tray { display: flex; align-items: center; justify-content: flex-end; padding-right: 26px; }
.tray-wide { width: 40px; height: 40px; }
.tray-system { gap: 10px; margin: 0 18px 0 9px; }
.clock { flex-direction: column; align-items: flex-end; font-size: 15px; line-height: 20px; }
.bell { margin-left: 10px; }
```
